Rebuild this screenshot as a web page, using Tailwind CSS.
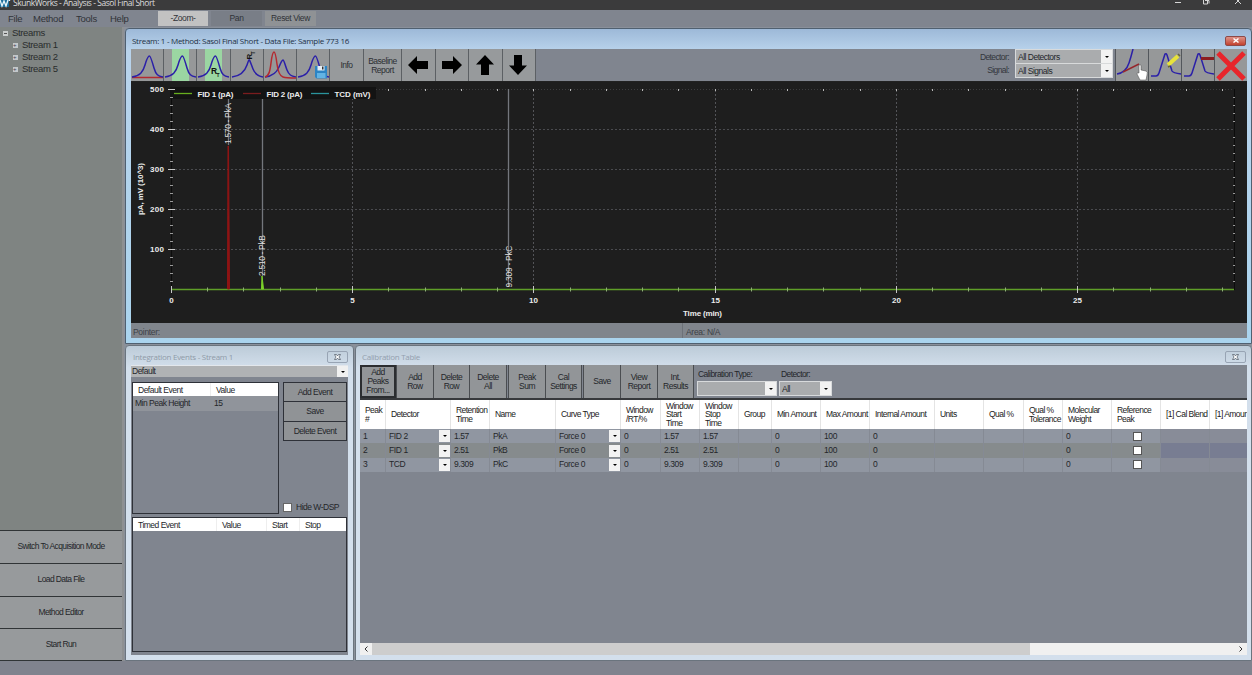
<!DOCTYPE html>
<html lang="en">
<head>
    <meta charset="UTF-8" />
    <meta name="viewport" content="width=device-width, initial-scale=1.0"/>
    <title>SkunkWorks - Analysis</title>
    <script src="https://cdn.jsdelivr.net/npm/@tailwindcss/browser@4"></script>
</head>
<body class="w-[1252px] h-[675px] overflow-hidden flex flex-col bg-[#80838e] font-['Liberation_Sans',sans-serif] text-[8.5px] leading-[9px] tracking-[-0.5px] text-[#24262a] whitespace-nowrap">

    <!-- Title bar -->
    <header class="h-[10px] shrink-0 bg-[#3b3b3c] flex items-start text-[#dcdcdc] font-['Open_Sans',sans-serif]">
        <svg class="w-[11px] h-[10px] shrink-0" viewBox="0 0 11 10"><path d="M0 0h9v7H0z" fill="#1d6f9e"/><path d="M0 0l2 6 2-5 2 5 2-6M9.500 0v1" fill="none" stroke="#e8f4fa" stroke-width="1.300"/></svg>
        <span class="ml-[2px] text-[8.5px] leading-[6px] tracking-[-0.46px]">SkunkWorks - Analysis - Sasol Final Short</span>
        <svg class="ml-auto mr-[8px] w-[70px] h-[10px]" viewBox="1174 0 70 10" fill="none" stroke="#d6d6d6"><path d="M1175 2.500h6M1207.500 0v4h-4V0M1205 .5h4v3M1235 -2l6 6M1241 -2l-6 6"/></svg>
    </header>

    <!-- Menu bar -->
    <nav class="h-[17px] shrink-0 bg-[#80858f] flex text-[9.5px] leading-[18px] tracking-[-0.25px] text-[#303338]">
        <div class="w-[158px] flex pl-[8px] gap-[12px]">
            <span class="w-[13px]">File</span><span class="w-[31px]">Method</span><span class="w-[22px]">Tools</span><span>Help</span>
        </div>
        <div class="flex gap-[3px] text-[8.5px] tracking-[-0.4px] text-center pt-px">
            <div class="w-[50px] h-[15px] leading-[15px] bg-[#c2c2c2]">-Zoom-</div>
            <div class="w-[51px] h-[15px] leading-[15px] bg-[#797e87]">Pan</div>
            <div class="w-[51px] h-[15px] leading-[15px] bg-[#8f9295]">Reset View</div>
        </div>
    </nav>

    <main class="h-[634px] flex shrink-0">
        <!-- Sidebar -->
        <aside class="w-[124px] shrink-0 flex flex-col border-r-2 border-[#8e9092] bg-[#7f8482]">
            <div class="h-[503px] text-[9.5px] leading-[12px] tracking-[-0.35px] text-[#292c2c]">
                <div class="flex items-center pl-[3px] gap-[4px]"><i class="size-[5px] bg-[#c9cccc] flex items-center justify-center"><i class="w-[3px] h-px bg-[#555]"></i></i>Streams</div>
                <div class="flex items-center pl-[13px] gap-[4px]"><i class="size-[5px] bg-[#c4c8cb] not-italic text-[6px] leading-[5px] text-[#445]">+</i>Stream 1</div>
                <div class="flex items-center pl-[13px] gap-[4px]"><i class="size-[5px] bg-[#c4c8cb] not-italic text-[6px] leading-[5px] text-[#445]">+</i>Stream 2</div>
                <div class="flex items-center pl-[13px] gap-[4px]"><i class="size-[5px] bg-[#c4c8cb] not-italic text-[6px] leading-[5px] text-[#445]">+</i>Stream 5</div>
            </div>
            <div class="flex-1 grid grid-rows-4 text-center tracking-[-0.6px]">
                <button class="bg-[#979a9c] border-t border-[#303436]">Switch To Acquisition Mode</button>
                <button class="bg-[#979a9c] border-t border-[#303436]">Load Data File</button>
                <button class="bg-[#979a9c] border-t border-[#303436]">Method Editor</button>
                <button class="bg-[#979a9c] border-y border-[#303436]">Start Run</button>
            </div>
        </aside>

        <div class="flex-1 min-w-0 flex flex-col bg-[#8a909a] pt-px pl-px gap-px">
            <!-- Chart window -->
            <section class="h-[316px] shrink-0 flex flex-col rounded-t-[4px] bg-[#aed0ea] border border-[#506070] pl-[5px] pr-[4px] pb-[5px] bg-linear-to-b from-[#9db9d8] from-0% via-[#b9d3ec] via-7% to-[#aad4ee]">
                <div class="h-[20px] shrink-0 flex items-center justify-between">
                    <span class="pl-px pt-[3px] font-['Open_Sans',sans-serif] text-[8px] tracking-[-0.28px] text-[#1e3145]">Stream: 1 - Method: Sasol Final Short - Data File: Sample 773 16</span>
                    <div class="mt-[3px] mr-px w-[21px] h-[10px] rounded-[2px] border border-[#8d4a48] bg-linear-to-b from-[#dc9288] to-[#c2402e] flex items-center justify-center">
                        <svg class="w-[6px] h-[5px]" viewBox="0 0 6 5" stroke="#fff" stroke-width="1.400"><path d="M.5.5l5 4M5.500.5l-5 4"/></svg>
                    </div>
                </div>

                <!-- Toolbar -->
                <div class="h-[33px] shrink-0 flex bg-[#80858f] border-b border-[#222]">
                    <div class="flex gap-px bg-[#5c6064] pr-px text-center text-[#2c2e32] tracking-[-0.5px]">
                        <div class="w-[32px] bg-[#969899]"><svg class="size-8" viewBox="0 0 32 32" fill="none" stroke-width="1.500"><path d="M1 28.500h31" stroke="#b32a30"/><path d="M1 28C9 27 12 23 14 16S17.500 7 18.500 7 21 12 23 19 27 27 32 28" stroke="#2b20a8"/></svg></div>
                        <div class="w-[32px] bg-[#969899]"><svg class="size-8" viewBox="0 0 32 32" fill="none" stroke-width="1.500"><path d="M8 0h17v32H8z" fill="#9bd6a2"/><path d="M1 28C9 27 12 23 14 16S17.500 7 18.500 7 21 12 23 19 27 27 32 28" stroke="#2b20a8"/></svg></div>
                        <div class="w-[33px] bg-[#969899]"><svg class="size-8" viewBox="0 0 32 32" fill="none" stroke-width="1.500"><path d="M8 0h17v32H8z" fill="#9bd6a2"/><path d="M1 28C9 27 12 23 14 16S17.500 7 18.500 7 21 12 23 19 27 27 32 28" stroke="#2b20a8"/><text x="14" y="25" fill="#111" class="text-[8.5px] font-bold">R</text><text x="19.500" y="28" fill="#111" class="text-[5px] font-bold">T</text></svg></div>
                        <div class="w-[32px] bg-[#969899]"><svg class="size-8" viewBox="0 0 32 32" fill="none" stroke-width="1.500"><path d="M1 28C10 27 14 22 16 16S17.500 12 18 11 20 15 22 20 27 27 32 28" stroke="#2b20a8"/><g transform="translate(20.500 10.500) rotate(-90)" fill="#111"><text class="text-[8px] font-bold">R</text><text x="5" y="3" class="text-[5px] font-bold">T</text></g></svg></div>
                        <div class="w-[32px] bg-[#969899]"><svg class="size-8" viewBox="0 0 32 32" fill="none" stroke-width="1.500"><path d="M1 28C10 27 13 23 15 18S18 11 19 11 21 16 23 21 27 27 32 28" stroke="#2b20a8"/><path d="M1 28C5 27 6 22 7 14S9 3 10 3 12 7 13 15 16 27 19 28 28 29 32 29" stroke="#b32a30"/></svg></div>
                        <div class="w-[32px] bg-[#969899]"><svg class="size-8" viewBox="0 0 32 32" fill="none" stroke-width="1.500"><path d="M1 28C9 27 12 23 14 16S17.500 7 18.500 7 21 12 23 19 27 27 32 28" stroke="#2b20a8"/><path d="M18 17h12v12.500H19.500L18 28z" fill="#2d84c4"/><path d="M20.500 17h7v4.500h-7z" fill="#e6eef4"/><path d="M25 17.500h1.500v3H25z" fill="#333"/><path d="M20 24h8.500v5H20z" fill="#62b3e4"/></svg></div>
                        <div class="w-[33px] bg-[#979a9c] leading-[32px]">Info</div>
                        <div class="w-[37px] bg-[#979a9c] pt-[8px] leading-[9px]">Baseline<br>Report</div>
                        <div class="w-[33px] bg-[#979a9c]"><svg class="size-8" viewBox="0 0 32 32"><path d="M6 16l9-9v5h11v8H15v5z"/></svg></div>
                        <div class="w-[32px] bg-[#979a9c]"><svg class="size-8" viewBox="0 0 32 32"><path d="M26 16l-9-9v5H6v8h11v5z"/></svg></div>
                        <div class="w-[33px] bg-[#979a9c]"><svg class="size-8" viewBox="0 0 32 32"><path d="M16 6l9 9.500h-5V26h-8V15.500H7z"/></svg></div>
                        <div class="w-[32px] bg-[#979a9c]"><svg class="size-8" viewBox="0 0 32 32"><path d="M15 26l9-9.500h-5V6h-8v10.500H6z"/></svg></div>
                    </div>
                    <div class="ml-auto pr-[6px] pt-[2px] text-right leading-[13px] text-[#33363c] tracking-[-0.6px]">Detector:<br>Signal:</div>
                    <div class="w-[98px] h-[29px] bg-[#d8dadb] p-px flex flex-col gap-px mr-[2px]">
                        <div class="h-[13px] flex leading-[14px] tracking-[-0.5px]"><div class="flex-1 bg-[#aaacae] pl-[2px]">All Detectors</div><div class="w-[11px] bg-[#f2f2f2] flex items-center justify-center"><i class="border-x-2 border-t-2 border-x-transparent border-t-black"></i></div></div>
                        <div class="h-[13px] flex leading-[14px] tracking-[-0.5px]"><div class="flex-1 bg-[#aaacae] pl-[2px]">All Signals</div><div class="w-[11px] bg-[#f2f2f2] flex items-center justify-center"><i class="border-x-2 border-t-2 border-x-transparent border-t-black"></i></div></div>
                    </div>
                    <div class="flex gap-px bg-[#53575c] pl-px">
                        <svg class="w-[32px] h-8 bg-[#969899]" viewBox="0 0 32 32" fill="none" stroke-width="1.500"><path d="M1 25C8 24 11 20 13 14S16 4 17 0" stroke="#2b20a8"/><path d="M7 23l16-8" stroke="#96272c"/><path d="M23 16q2-1 2 1v4l5 1q2 1 1 4l-1 5h-6l-3-6q0-2 2-1z" fill="#fff" stroke="#444" stroke-width=".5"/></svg>
                        <svg class="w-[32px] h-8 bg-[#969899]" viewBox="0 0 32 32" fill="none" stroke-width="1.500"><path d="M2 27h5q2 0 3-3L16 5q1-1 2 1l5 16q1 2 9 3" stroke="#2b20a8"/><path d="M19 16l10-9" stroke="#e8e23c" stroke-width="4"/><path d="M19 18l2-1M29 5l2 2" stroke="#6b6734"/></svg>
                        <svg class="w-[32px] h-8 bg-[#969899]" viewBox="0 0 32 32" fill="none" stroke-width="1.500"><path d="M2 27h5q2 0 3-3L16 5q1-1 2 1l5 16q1 2 9 3" stroke="#2b20a8"/><path d="M19 9.500h14" stroke="#8d1d20" stroke-width="3"/></svg>
                        <svg class="w-[32px] h-8 bg-[#969899]" viewBox="0 0 32 32" stroke="#e8252b" stroke-width="5"><path d="M3 4l26 26M29 4L3 30"/></svg>
                    </div>
                </div>

                <!-- Chromatogram -->
                <svg class="w-full h-[241px] shrink-0 bg-[#1e1e1e]" viewBox="131 82 1116 241" preserveAspectRatio="none">
                    <g id="chartGrid"></g>
                    <path d="M171.500 89v201M1234.500 89v201" stroke="#0c0c0c"/>
                    <path d="M228.500 99v46M262.500 94v182M508.500 89v198" stroke="#74777d" stroke-width="1.300"/>
                    <path d="M171 289.500h1063" stroke="#5f9f28" stroke-width="1.300"/>
                    <path d="M227.500 289l.5-143h.5l1 143z" fill="#8f1414" stroke="#8f1414"/>
                    <path d="M261.500 289l.5-13 1.500 13z" fill="#7cd22a" stroke="#7cd22a"/>
                    <path d="M170 87h206v12H170z" fill="#131313"/>
                    <path d="M174 93.500h18" stroke="#67ae1e" stroke-width="1.300"/>
                    <path d="M243 93.500h18" stroke="#7a1c1e" stroke-width="1.300"/>
                    <path d="M311 93.500h18" stroke="#2a939c" stroke-width="1.300"/>
                    <g id="chartTicks"></g>
                    <g fill="#ececec" class="text-[8px] font-bold tracking-normal">
                        <text x="197.500" y="96.500" textLength="36">FID 1 (pA)</text>
                        <text x="266.500" y="96.500" textLength="36">FID 2 (pA)</text>
                        <text x="334.500" y="96.500" textLength="36">TCD (mV)</text>
                        <text x="683" y="315.500" textLength="39">Time (min)</text>
                        <text transform="translate(143 215) rotate(-90)" textLength="52">pA, mV (10^3)</text>
                    </g>
                    <g fill="#dedede" class="text-[8.5px] tracking-normal">
                        <text transform="translate(231 144) rotate(-90)" textLength="41">1.570 - PkA</text>
                        <text transform="translate(265 276) rotate(-90)" textLength="41">2.510 - PkB</text>
                        <text transform="translate(511.500 287.500) rotate(-90)" textLength="42">9.309 - PkC</text>
                    </g>
                </svg>
                <div class="h-[15px] shrink-0 flex bg-[#80858c] leading-[18px] text-[#3c4147] tracking-[-0.3px]">
                    <div class="w-[552px] pl-[2px] border-r border-[#6d7279]">Pointer:</div>
                    <div class="pl-[3px]">Area: N/A</div>
                </div>
            </section>

            <div class="flex-1 flex gap-px min-h-0">
                <!-- Integration events -->
                <section class="w-[229px] shrink-0 flex flex-col rounded-t-[4px] border border-[#6a747e] bg-[#ccd9e6] bg-linear-to-b from-[#bccbd8] from-0% to-[#d3dfec] to-7% px-[5px] pb-[5px]">
                    <div class="h-[19px] shrink-0 flex items-center justify-between text-[#8f9ba8] font-['Open_Sans',sans-serif] text-[8px] tracking-[-0.27px]">
                        <span class="pl-[2px] pt-[2px]">Integration Events - Stream 1</span>
                        <div class="mt-[3px] w-[21px] h-[12px] rounded-[2px] border border-[#98a4b4] flex items-center justify-center"><svg class="w-[7px] h-[6px]" viewBox="0 0 7 6" stroke="#596370" fill="#fff" stroke-width=".8"><path d="M.5.5h2l1 1.500 1-1.500h2L5 3l1.500 2.500h-2l-1-1.500-1 1.500h-2L2 3z"/></svg></div>
                    </div>
                    <div class="h-[12px] shrink-0 flex bg-[#b0b2b4] border-t border-[#e3e7ec] leading-[11px]">
                        <span class="flex-1 pl-px">Default</span>
                        <div class="w-[11px] bg-[#f0f0f0] flex items-center justify-center"><i class="border-x-2 border-t-2 border-x-transparent border-t-black"></i></div>
                    </div>
                    <div class="flex-1 bg-[#80858f] p-[1px] pt-[5px] pb-[3px] flex flex-col gap-[3px]">
                        <div class="h-[132px] flex gap-[4px]">
                            <div class="w-[147px] border border-[#2e3138]">
                                <div class="h-[13px] bg-white flex leading-[15px]"><span class="w-[78px] pl-[5px] border-r border-[#eee]">Default Event</span><span class="pl-[5px]">Value</span></div>
                                <div class="h-[15px] bg-[#90949b] flex leading-[15px]"><span class="w-[81px] pl-[2px]">Min Peak Height</span><span>15</span></div>
                            </div>
                            <div class="flex-1 flex flex-col tracking-[-0.5px]">
                                <div class="h-[59px] grid grid-rows-3 text-center leading-[19px] bg-[#2e3138] p-px gap-px">
                                    <div class="bg-[#909396]">Add Event</div><div class="bg-[#909396]">Save</div><div class="bg-[#909396]">Delete Event</div>
                                </div>
                                <div class="mt-auto mb-[2px] flex items-center gap-[4px] tracking-[-0.5px]"><i class="size-[9px] bg-white border border-[#666]"></i>Hide W-DSP</div>
                            </div>
                        </div>
                        <div class="flex-1 border border-[#2e3138]">
                            <div class="h-[13px] bg-white flex leading-[15px]">
                                <span class="w-[84px] pl-[5px] border-r border-[#eee]">Timed Event</span>
                                <span class="w-[50px] pl-[5px] border-r border-[#eee]">Value</span>
                                <span class="w-[33px] pl-[5px] border-r border-[#eee]">Start</span>
                                <span class="pl-[5px]">Stop</span>
                            </div>
                        </div>
                    </div>
                </section>

                <!-- Calibration table -->
                <section class="flex-1 min-w-0 flex flex-col rounded-t-[4px] border border-[#6a747e] bg-[#ccd9e6] bg-linear-to-b from-[#bccbd8] from-0% to-[#d3dfec] to-7% px-[4px] pb-[5px]">
                    <div class="h-[19px] shrink-0 flex items-center justify-between text-[#93a0ae] font-['Open_Sans',sans-serif] text-[8px] tracking-[-0.3px]">
                        <span class="pl-[2px] pt-[2px]">Calibration Table</span>
                        <div class="mt-[3px] mr-[1px] w-[21px] h-[12px] rounded-[2px] border border-[#98a4b4] flex items-center justify-center"><svg class="w-[7px] h-[6px]" viewBox="0 0 7 6" stroke="#596370" fill="#fff" stroke-width=".8"><path d="M.5.5h2l1 1.500 1-1.500h2L5 3l1.500 2.500h-2l-1-1.500-1 1.500h-2L2 3z"/></svg></div>
                    </div>
                    <div class="h-[35px] shrink-0 bg-[#80858f] border-b-2 border-[#37393c] flex text-center leading-[9px] tracking-[-0.5px]">
                        <div class="flex gap-px bg-[#4a4d51] pr-px">
                            <div class="w-[36px] bg-[#929598] border-2 border-[#2b2d30] flex items-center justify-center">Add<br>Peaks<br>From...</div>
                            <div class="w-[36px] bg-[#929598] flex items-center justify-center">Add<br>Row</div>
                            <div class="w-[35px] bg-[#929598] flex items-center justify-center">Delete<br>Row</div>
                            <div class="w-[36px] bg-[#929598] flex items-center justify-center">Delete<br>All</div>
                            <div class="w-[1px] bg-[#80858f]"></div>
                            <div class="w-[36px] bg-[#929598] flex items-center justify-center">Peak<br>Sum</div>
                            <div class="w-[35px] bg-[#929598] flex items-center justify-center">Cal<br>Settings</div>
                            <div class="w-[1px] bg-[#80858f]"></div>
                            <div class="w-[36px] bg-[#929598] flex items-center justify-center">Save</div>
                            <div class="w-[36px] bg-[#929598] flex items-center justify-center">View<br>Report</div>
                            <div class="w-[35px] bg-[#929598] flex items-center justify-center">Int.<br>Results</div>
                        </div>
                        <div class="w-[80px] ml-[3px] text-left pt-[5px]">
                            <div class="pl-[1px] h-[11px] tracking-[-0.7px] word-spacing-normal"><span class="tracking-[-0.55px]">Calibration Type:</span></div>
                            <div class="h-[15px] border border-[#d8dadc] flex"><div class="flex-1 bg-[#aaacae]"></div><div class="w-[11px] bg-[#f2f2f2] flex items-center justify-center"><i class="border-x-2 border-t-2 border-x-transparent border-t-black"></i></div></div>
                        </div>
                        <div class="w-[53px] ml-[2px] text-left pt-[5px]">
                            <div class="pl-[2px] h-[11px] tracking-[-0.6px]">Detector:</div>
                            <div class="h-[15px] border border-[#d8dadc] flex leading-[14px]"><div class="flex-1 bg-[#aaacae] pl-[2px]">All</div><div class="w-[11px] bg-[#f2f2f2] flex items-center justify-center"><i class="border-x-2 border-t-2 border-x-transparent border-t-black"></i></div></div>
                        </div>
                    </div>
                    <div id="calTable" class="flex-1 bg-[#80858f] overflow-hidden tracking-[-0.55px]"></div>
                    <!-- Horizontal scrollbar -->
                    <div class="h-[12px] shrink-0 flex bg-[#f0f0f0] justify-between items-center px-[4px]">
                        <svg class="w-[4px] h-[6px]" viewBox="0 0 4 6" fill="none" stroke="#333"><path d="M3.500.5L1 3l2.500 2.500"/></svg>
                        <div class="w-[658px] h-full bg-[#cdcdcd] ml-[4px] mr-auto"></div>
                        <svg class="w-[4px] h-[6px]" viewBox="0 0 4 6" fill="none" stroke="#333"><path d="M.5.5L3 3 .5 5.500"/></svg>
                    </div>
                </section>
            </div>
        </div>
    </main>

    <script>
    // Calibration table: [header, width]
    const columns = [
        ["Peak<br>#", 26], ["Detector", 65], ["Retention<br>Time", 39], ["Name", 66], ["Curve Type", 65],
        ["Window<br>/RT/%", 40], ["Window<br>Start<br>Time", 39], ["Window<br>Stop<br>Time", 39], ["Group", 33],
        ["Min Amount", 49], ["Max Amount", 49], ["Internal Amount", 65], ["Units", 49], ["Qual %", 40],
        ["Qual %<br>Tolerance", 39], ["Molecular<br>Weight", 49], ["Reference<br>Peak", 49],
        ["[1] Cal Blend", 49], ["[1] Amoun", 38]
    ];
    const rows = [
        ["1", "FID 2", "1.57", "PkA", "Force 0", "0", "1.57", "1.57", "", "0", "100", "0", "", "", "", "0", "", "", ""],
        ["2", "FID 1", "2.51", "PkB", "Force 0", "0", "2.51", "2.51", "", "0", "100", "0", "", "", "", "0", "", "", ""],
        ["3", "TCD", "9.309", "PkC", "Force 0", "0", "9.309", "9.309", "", "0", "100", "0", "", "", "", "0", "", "", ""]
    ];

    const dropdown = `<div class="ml-auto w-[11px] h-[12px] bg-[#f2f2f2] flex items-center justify-center"><i class="border-x-2 border-t-2 border-x-transparent border-t-black"></i></div>`;
    const checkbox = `<i class="mx-auto size-[9px] bg-white border border-[#555]"></i>`;

    let html = `<div class="h-[29px] flex bg-white text-[#222] leading-[8.5px]">`;
    columns.forEach(([label, width]) => {
        html += `<div class="shrink-0 flex items-center pl-[5px] border-r border-[#e4e4e4]" style="width:${width}px"><span>${label}</span></div>`;
    });
    html += `</div>`;

    rows.forEach((row, r) => {
        const bg = r === 1 ? "bg-[#868b8d]" : "bg-[#9096a1]";
        html += `<div class="h-[14.400px] flex tracking-[-0.4px] ${bg}">`;
        row.forEach((value, c) => {
            let cellBg = "";
            if (c > 16) cellBg = r === 1 ? "bg-[#787d92]" : "bg-[#888c98]";
            let cell = value;
            if (c === 1 || c === 4) cell += dropdown;
            if (c === 16) cell = checkbox;
            html += `<div class="shrink-0 flex items-center pl-[3px] border-r border-[#858a94] ${cellBg}" style="width:${columns[c][1]}px">${cell}</div>`;
        });
        html += `</div>`;
    });
    document.getElementById("calTable").innerHTML = html;

    // Chart grid and ticks
    const xPos = (min) => 171.3 + min * 36.25;
    const yPos = (val) => 289.5 - val * 0.401;
    let grid = "";
    let ticks = "";

    for (let v = 100; v <= 400; v += 100) {
        grid += `<path d="M171 ${Math.round(yPos(v)) + 0.5}H1234" stroke="#4a4b4f" stroke-dasharray="2 2"/>`;
    }
    for (let v = 100; v <= 500; v += 100) {
        ticks += `<path d="M168 ${Math.round(yPos(v)) + 0.5}h7" stroke="#c8c8c8"/>`;
        ticks += `<text x="164" y="${yPos(v) + 2.5}" text-anchor="end" fill="#ececec" textLength="14" class="text-[8px] font-bold tracking-normal">${v}</text>`;
    }
    for (let v = 20; v < 500; v += 20) {
        if (v % 100 === 0) continue;
        ticks += `<path d="M170 ${Math.round(yPos(v)) + 0.5}h3M1233 ${Math.round(yPos(v)) + 0.5}h2" stroke="#9a9a9a"/>`;
    }
    for (let m = 0; m <= 29; m++) {
        const x = Math.floor(xPos(m)) + 0.5;
        if (m % 5 === 0) {
            if (m > 0) grid += `<path d="M${x} 90V289" stroke="#535458" stroke-dasharray="2 2"/>`;
            ticks += `<path d="M${x} 286v7" stroke="#c8c8c8"/>`;
            ticks += `<text x="${x}" y="303" text-anchor="middle" fill="#ececec" class="text-[8px] font-bold tracking-normal">${m}</text>`;
        } else {
            ticks += `<path d="M${x} 287.500v4" stroke="#8fae78"/>`;
        }
        if (m > 5) ticks += `<path d="M${x} 89v2" stroke="#b8b8b8"/>`;
    }
    grid += `<path d="M376 89.500H1234" stroke="#3c3c3e" stroke-dasharray="1 2"/>`;
    document.getElementById("chartGrid").innerHTML = grid;
    document.getElementById("chartTicks").innerHTML = ticks;
    </script>
</body>
</html>
